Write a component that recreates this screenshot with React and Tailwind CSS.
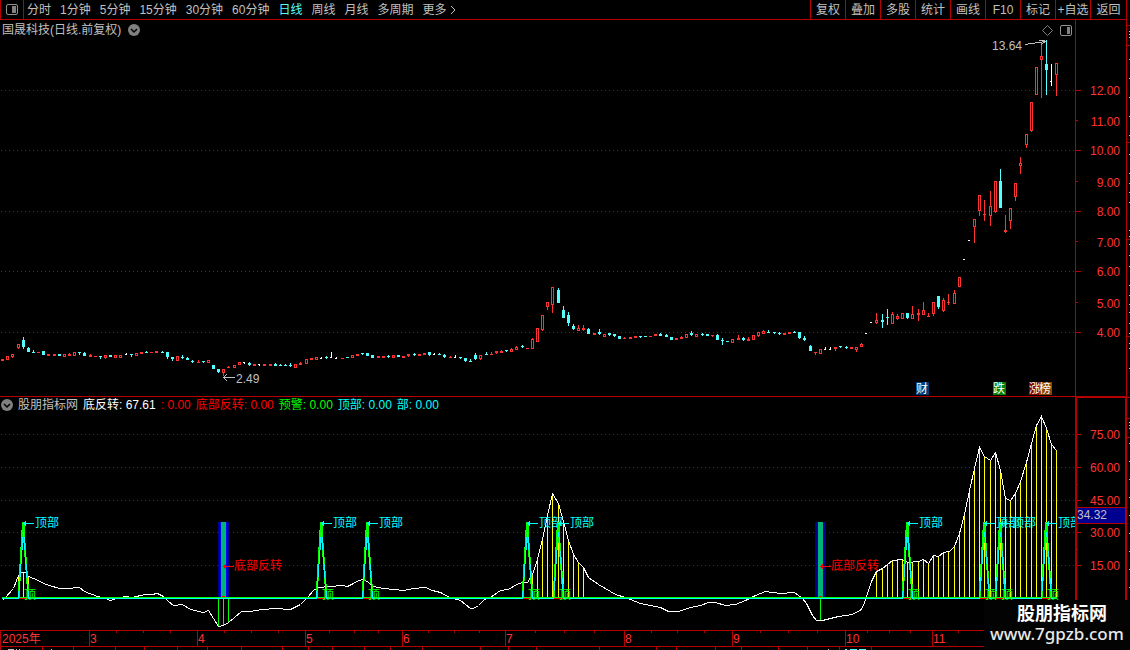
// App.jsx
import React from 'react';

const PERIODS = ['分时', '1分钟', '5分钟', '15分钟', '30分钟', '60分钟', '日线', '周线', '月线', '多周期', '更多'];
const ACTIONS = ['复权', '叠加', '多股', '统计', '画线', 'F10', '标记', '+自选', '返回'];

// [kind, high, open/close top, open/close bottom, low]
// h = hollow red, r = solid red, c = cyan, w = white
const CANDLES = [
    ['r', 359, 359, 361, 361], ['h', 356, 356, 360, 360], ['h', 354, 354, 357, 358], ['h', 344, 344, 348, 349], ['c', 337, 340, 347, 349],
    ['c', 347, 348, 352, 352], ['c', 350, 352, 353, 353], ['r', 352, 352, 353, 353], ['c', 351, 351, 355, 355], ['r', 354, 354, 356, 356],
    ['r', 354, 354, 356, 356], ['c', 354, 354, 356, 356], ['h', 354, 354, 357, 357], ['r', 353, 354, 356, 356], ['h', 352, 352, 356, 356],
    ['c', 352, 352, 353, 355], ['c', 352, 353, 356, 356], ['r', 354, 355, 357, 357], ['r', 356, 356, 357, 357], ['c', 356, 356, 357, 359],
    ['h', 355, 355, 358, 359], ['c', 355, 355, 357, 357], ['h', 355, 355, 358, 358], ['h', 355, 355, 358, 358], ['w', 353, 354, 355, 355],
    ['c', 354, 354, 355, 357], ['h', 353, 353, 356, 356], ['r', 352, 352, 354, 354], ['c', 351, 352, 353, 353], ['r', 352, 352, 353, 353],
    ['r', 351, 351, 353, 353], ['c', 351, 352, 353, 353], ['c', 352, 352, 357, 359], ['c', 357, 357, 359, 361], ['h', 356, 356, 361, 361],
    ['c', 355, 357, 358, 359], ['c', 357, 358, 360, 360], ['c', 360, 361, 362, 363], ['r', 360, 362, 363, 363], ['c', 361, 361, 362, 363],
    ['h', 360, 360, 363, 363], ['c', 365, 365, 369, 369], ['c', 369, 369, 372, 373], ['h', 369, 369, 373, 376], ['r', 366, 367, 368, 368],
    ['h', 365, 365, 368, 368], ['h', 362, 362, 365, 365], ['w', 362, 362, 363, 364], ['c', 362, 363, 365, 366], ['r', 364, 364, 366, 366],
    ['w', 364, 364, 365, 366], ['r', 364, 364, 366, 366], ['r', 364, 364, 366, 366], ['c', 363, 364, 366, 366], ['c', 364, 365, 366, 366],
    ['c', 364, 365, 366, 366], ['c', 363, 365, 366, 367], ['h', 364, 364, 368, 368], ['r', 362, 363, 365, 365], ['h', 359, 359, 364, 364],
    ['r', 358, 358, 360, 360], ['h', 357, 357, 360, 360], ['w', 357, 358, 359, 359], ['c', 356, 357, 358, 359], ['w', 352, 357, 358, 358],
    ['w', 357, 358, 359, 359], ['r', 358, 358, 359, 359], ['c', 357, 357, 358, 358], ['h', 355, 355, 358, 358], ['r', 354, 354, 356, 356],
    ['c', 353, 353, 354, 355], ['c', 353, 353, 356, 356], ['c', 355, 355, 358, 358], ['r', 356, 356, 358, 358], ['r', 356, 356, 358, 358],
    ['c', 355, 356, 357, 358], ['h', 355, 355, 358, 358], ['c', 355, 355, 357, 357], ['r', 356, 356, 358, 358], ['r', 354, 354, 356, 357],
    ['c', 353, 354, 355, 356], ['r', 354, 354, 356, 356], ['r', 353, 353, 355, 355], ['c', 352, 352, 355, 356], ['w', 353, 354, 355, 355],
    ['c', 353, 354, 355, 355], ['c', 354, 355, 357, 358], ['r', 356, 357, 358, 358], ['w', 355, 357, 358, 358], ['c', 357, 357, 358, 359],
    ['c', 358, 358, 361, 362], ['c', 359, 361, 362, 362], ['c', 353, 355, 359, 360], ['h', 355, 355, 359, 360], ['c', 352, 354, 355, 355],
    ['r', 352, 354, 355, 355], ['r', 351, 351, 353, 354], ['r', 350, 351, 353, 353], ['c', 350, 350, 351, 352], ['h', 348, 349, 352, 352],
    ['h', 346, 347, 350, 350], ['c', 345, 346, 347, 348], ['r', 348, 348, 349, 349], ['h', 338, 339, 349, 349], ['h', 328, 328, 342, 342],
    ['h', 315, 315, 330, 331], ['h', 302, 302, 307, 310], ['h', 287, 287, 305, 313], ['c', 288, 290, 303, 303], ['c', 306, 310, 318, 318],
    ['c', 312, 315, 323, 326], ['c', 324, 326, 329, 330], ['h', 325, 328, 331, 331], ['r', 325, 328, 330, 331], ['c', 328, 329, 334, 334],
    ['r', 333, 333, 335, 335], ['c', 329, 332, 334, 335], ['h', 334, 334, 337, 337], ['c', 333, 333, 335, 336], ['c', 334, 334, 336, 337],
    ['c', 336, 336, 339, 339], ['r', 337, 338, 339, 339], ['r', 337, 337, 339, 339], ['r', 336, 336, 338, 338], ['c', 336, 336, 337, 338],
    ['c', 336, 336, 337, 337], ['r', 336, 336, 337, 337], ['r', 334, 334, 336, 336], ['c', 333, 334, 336, 336], ['c', 334, 335, 337, 337],
    ['c', 337, 337, 340, 340], ['r', 338, 338, 340, 340], ['r', 336, 337, 339, 339], ['h', 334, 334, 338, 338], ['c', 331, 333, 335, 336],
    ['h', 334, 334, 337, 337], ['c', 333, 334, 335, 336], ['c', 334, 334, 336, 336], ['r', 335, 335, 336, 337], ['c', 334, 335, 340, 340],
    ['c', 338, 340, 341, 345], ['c', 341, 341, 342, 342], ['h', 339, 339, 343, 343], ['r', 335, 338, 340, 340], ['c', 337, 338, 340, 341],
    ['r', 337, 339, 341, 341], ['h', 335, 335, 340, 340], ['h', 332, 332, 336, 337], ['h', 330, 331, 334, 334], ['c', 330, 332, 333, 333],
    ['c', 332, 332, 333, 334], ['c', 332, 333, 334, 335], ['r', 333, 333, 335, 335], ['r', 332, 332, 334, 334], ['c', 331, 332, 333, 333],
    ['c', 332, 332, 338, 339], ['c', 336, 338, 340, 341], ['c', 345, 346, 351, 351], ['r', 352, 352, 353, 355], ['h', 349, 349, 354, 354],
    ['w', 347, 349, 350, 350], ['w', 347, 349, 350, 350], ['r', 347, 347, 349, 351], ['c', 346, 346, 347, 348], ['c', 346, 347, 348, 349],
    ['r', 347, 347, 349, 349], ['h', 347, 347, 350, 352], ['h', 343, 344, 347, 347], ['w', 333, 333, 334, 334], ['w', 322, 322, 323, 323],
    ['h', 313, 320, 323, 324], ['c', 314, 320, 322, 328], ['c', 309, 317, 318, 325], ['h', 312, 314, 324, 324], ['h', 314, 316, 319, 320],
    ['h', 313, 313, 319, 319], ['c', 313, 313, 318, 319], ['h', 306, 314, 319, 319], ['r', 309, 313, 315, 321], ['h', 302, 310, 315, 315],
    ['r', 313, 316, 317, 317], ['h', 302, 302, 314, 316], ['c', 296, 296, 307, 309], ['h', 298, 300, 311, 312], ['r', 294, 302, 303, 305],
    ['h', 290, 293, 304, 304], ['h', 277, 277, 287, 287], ['w', 259, 259, 260, 260], ['w', 240, 240, 241, 241], ['h', 219, 219, 227, 243],
    ['h', 195, 195, 211, 216], ['r', 200, 214, 215, 221], ['h', 191, 206, 216, 226], ['h', 181, 181, 212, 213], ['c', 169, 181, 208, 208],
    ['r', 215, 230, 232, 233], ['h', 208, 208, 221, 229], ['h', 183, 183, 197, 201], ['h', 157, 163, 166, 174], ['h', 134, 134, 145, 148],
    ['h', 102, 102, 131, 132], ['h', 67, 67, 95, 95], ['h', 43, 56, 60, 98], ['c', 40, 64, 70, 95], ['w', 64, 81, 82, 86],
    ['h', 63, 63, 75, 96],
];

const COLORS = { h: '#ff3232', r: '#ff3232', c: '#54ffff', w: '#ffffff' };
const LINE = '#b40000';

// seven candles take 36px
const candleX = (i) => 18 + 36 * Math.floor((i - 3) / 7) + 5 * ((((i - 3) % 7) + 7) % 7);

const CURVE = [
    [2, 600], [5, 597], [13, 588], [18, 575], [21, 572], [25, 572], [28, 576], [33, 578], [38, 580], [43, 583], [49, 585], [59, 588],
    [71, 588], [74, 587], [79, 587], [84, 591], [97, 596], [105, 598], [110, 600], [116, 598], [125, 596], [132, 597], [140, 595],
    [146, 594], [151, 594], [157, 593], [163, 596], [168, 601], [173, 605], [182, 604], [190, 609], [203, 612], [208, 610], [213, 618],
    [218, 626], [223, 625], [228, 622], [234, 617], [241, 611], [249, 611], [262, 609], [275, 608], [290, 609], [300, 604], [308, 596],
    [313, 590], [318, 587], [330, 586], [342, 585], [347, 586], [353, 583], [358, 580], [363, 579], [368, 582], [373, 586], [383, 588],
    [393, 589], [403, 590], [413, 588], [425, 587], [432, 590], [440, 592], [449, 597], [460, 600], [470, 608], [473, 608], [478, 605],
    [484, 599], [490, 597], [500, 590], [508, 589], [516, 584], [522, 582], [527, 582], [532, 574], [537, 559], [542, 539], [547, 515],
    [552, 493], [558, 503], [563, 521], [568, 540], [573, 554], [578, 562], [583, 567], [588, 577], [598, 584], [610, 591], [615, 594],
    [625, 597], [640, 603], [650, 605], [660, 607], [668, 611], [678, 611], [690, 607], [700, 605], [708, 602], [715, 602], [725, 605],
    [735, 604], [745, 600], [755, 595], [765, 591], [780, 593], [794, 592], [802, 598], [806, 603], [812, 615], [816, 620], [822, 620],
    [830, 618], [838, 616], [852, 614], [861, 609], [864, 602], [866, 596], [871, 581], [876, 571], [882, 568], [887, 564], [892, 560],
    [902, 559], [907, 562], [918, 561], [923, 559], [928, 563], [933, 555], [938, 556], [943, 552], [949, 551], [954, 546], [959, 533],
    [964, 514], [969, 490], [974, 468], [979, 447], [984, 456], [990, 460], [995, 452], [1000, 470], [1005, 498], [1010, 500],
    [1015, 493], [1020, 481], [1026, 462], [1031, 443], [1036, 425], [1041, 416], [1046, 428], [1051, 444], [1056, 450],
];

const curveY = (x) => {
    const k = CURVE.findIndex((p) => p[0] >= x);
    if (k <= 0) return CURVE[0][1];
    const [x0, y0] = CURVE[k - 1];
    const [x1, y1] = CURVE[k];
    return Math.round(y0 + ((y1 - y0) * (x - x0)) / (x1 - x0));
};

const ALL_X = CANDLES.map((_, i) => candleX(i));
const YELLOW_X = ALL_X.filter((x) => (x >= 18 && x <= 28) || (x >= 532 && x <= 583) || x >= 876);
const SPIKES = [23, 321, 367, 527, 558, 907, 984, 1000, 1046];

const PRICE_TICKS = [[90, '12.00'], [120, '11.00'], [150, '10.00'], [181, '9.00'], [211, '8.00'], [241, '7.00'], [271, '6.00'], [302, '5.00'], [332, '4.00']];
const PRICE_GRID = [90, 150, 211, 271, 332];
const IND_TICKS = [[434, '75.00'], [467, '60.00'], [500, '45.00'], [532, '30.00'], [565, '15.00']];
const IND_MINOR = [451, 484, 549];

const BADGES = [
    [916, '财', '#003c78'],
    [993, '跌', '#008200'],
    [1029, '涨', '#820000'],
    [1039, '榜', '#8c4600'],
];

const LEGEND = [
    ['股朋指标网', 'text-[#c0c0c0]'],
    ['底反转: 67.61', 'text-white'],
    [': 0.00', 'text-[#ff0000]'],
    ['底部反转: 0.00', 'text-[#ff0000]'],
    ['预警: 0.00', 'text-[#00ff00]'],
    ['顶部: 0.00', 'text-[#00ffff]'],
    ['部: 0.00', 'text-[#00ffff]'],
];

const MONTHS = [[89, '3'], [197, '4'], [305, '5'], [402, '6'], [505, '7'], [624, '8'], [732, '9'], [845, '10'], [932, '11']];
const WEEKS = [116, 143, 170, 224, 251, 278, 329, 354, 378, 428, 454, 479, 535, 564, 594, 651, 677, 704, 760, 788, 817, 867, 889, 910, 958];
const TABS = [0, 42, 73, 115, 144, 177, 207, 241, 282, 308, 332, 364, 390, 422, 480, 508, 536, 599, 656, 676, 715, 741, 778, 807, 839, 871];

const EDGE_RED = [25, 45, 142, 239, 336, 397, 418, 437];
const EDGE_GREY = [31, 34, 37, 59, 78, 97, 116, 135, 154, 173, 183, 192, 202, 230, 236, 244, 255, 266, 285, 295, 304, 312, 323, 333, 343, 348, 368, 422, 425, 428, 443, 461, 479, 497, 515, 533, 551, 569, 587];

const PanelIcon = ({ side }) => (
    <svg width="12" height="11" viewBox="0 0 12 11">
        <rect x="0.5" y="0.5" width="11" height="10" rx="1.5" fill="none" stroke="#909090" />
        <rect x={side === 'left' ? 6 : 7} y="2" width={side === 'left' ? 4 : 3} height="7" fill="#808080" />
    </svg>
);

const Chevron = () => (
    <svg width="12" height="12" viewBox="0 0 12 12">
        <circle cx="6" cy="6" r="6" fill="#808080" />
        <path d="M3 5 L6 8 L9 5" fill="none" stroke="#000" strokeWidth="1.5" />
    </svg>
);

const Grid = ({ rows }) =>
    rows.map((y) => <line key={y} x1="1" x2="1075" y1={y + 0.5} y2={y + 0.5} stroke={LINE} strokeDasharray="1 3" />);

const Candle = ({ i, data }) => {
    const [kind, high, top, bottom, low] = data;
    const x = candleX(i);
    const color = COLORS[kind];
    return (
        <g fill={color}>
            {top > high && <rect x={x} y={high} width="1" height={top - high} />}
            {low > bottom && <rect x={x} y={bottom} width="1" height={low - bottom} />}
            {kind === 'h' ? (
                <rect x={x - 0.5} y={top + 0.5} width="2" height={bottom - top - 1} fill="none" stroke={color} />
            ) : (
                <rect x={x - 1} y={top} width={kind === 'w' ? 2 : 3} height={bottom - top} />
            )}
        </g>
    );
};

const PriceChart = () => (
    <svg viewBox="0 40 1075 356" preserveAspectRatio="xMinYMin meet" className="block w-full h-[356px]" shapeRendering="crispEdges" fontSize="12">
        <Grid rows={PRICE_GRID} />
        {CANDLES.map((c, i) => (
            <Candle key={i} i={i} data={c} />
        ))}
        <rect x="1051" y="64" width="1" height="22" fill="#fff" />
        {/* high and low marks */}
        <g fill="none" stroke="#c0c0c0">
            <path d="M1025 44.5 L1032 43.5 L1045 41.5 M1039 40.5 H1045 M1045.5 41 L1041 45" />
            <path d="M223 377.5 H235 M227 374 L223.5 377.5 L227 381" />
        </g>
        <g fill="#c0c0c0">
            <text x="992" y="50">13.64</text>
            <text x="236" y="383">2.49</text>
        </g>
        {BADGES.map(([x, label, color]) => (
            <g key={label}>
                <rect x={x} y="382" width="13" height="13" fill={color} />
                <text x={x} y="393" fill="#fff">{label}</text>
            </g>
        ))}
    </svg>
);

const PriceAxis = () => (
    <svg viewBox="0 20 51 376" className="block shrink-0 w-[51px] h-[376px]" shapeRendering="crispEdges" fontSize="12" fill={LINE}>
        <rect x="0" y="20" width="1" height="376" />
        {PRICE_TICKS.map(([y, label]) => {
            const major = PRICE_GRID.includes(y);
            return (
                <g key={label}>
                    <rect x="1" y={y} width={major ? 5 : 2} height="1" />
                    <text x="45" y={major ? y + 5 : y + 6} textAnchor="end" fill="#ff3232">{label}</text>
                </g>
            );
        })}
    </svg>
);

const Spike = ({ x }) => (
    <g fill="none">
        <rect x={x - 4} y="598" width="9" height="1" fill="#ff0000" />
        <path d={`M${x - 4.5} 598 L${x} 522 L${x + 5.5} 598`} stroke="#00ff00" strokeWidth="2" />
        <path d={`M${x - 4.5} 598 L${x + 0.5} 530 L${x + 5.5} 598`} stroke="#00ffff" />
        <rect x={x - 1} y="522" width="3" height="10" fill="#00ff00" />
        <path d={`M${x + 1} 523.5 H${x + 11} M${x + 3} 521.5 L${x + 1} 523.5 L${x + 3} 525.5`} stroke="#00ffff" />
        <text x={x + 1} y="599" fill="#00ff00">顶</text>
        <text x={x + 12} y="527" fill="#00ffff">顶部</text>
    </g>
);

const Reversal = ({ x, bright }) => (
    <g>
        <rect x={x - 5} y="522" width="11" height="75" fill="#000090" />
        {bright && <rect x={x - 3} y="522" width="7" height="75" fill="#0000ff" />}
        <rect x={x - 2} y="522" width="5" height="75" fill="#00b478" />
        <rect x={x - 1} y="596" width="3" height="1" fill="#ff0000" />
        <path d={`M${x + 1} 566.5 H${x + 11} M${x + 3} 564.5 L${x + 1} 566.5 L${x + 3} 568.5`} fill="none" stroke="#ff0000" />
        <text x={x + 11} y="570" fill="#ff0000">底部反转</text>
    </g>
);

const IndicatorChart = () => (
    <svg viewBox="0 414 1075 216" preserveAspectRatio="xMinYMin meet" className="block w-full h-[216px]" shapeRendering="crispEdges" fontSize="12">
        <Grid rows={IND_TICKS.map((t) => t[0])} />
        {YELLOW_X.map((x) => (
            <rect key={x} x={x} y={curveY(x)} width="1" height={597 - curveY(x)} fill="#ffff00" />
        ))}
        {[218, 223, 228, 820].map((x) => (
            <rect key={x} x={x} y="598" width="1" height={curveY(x) - 598} fill="#00ff00" />
        ))}
        <polyline points={CURVE.map(([x, y]) => `${x + 0.5},${y + 0.5}`).join(' ')} fill="none" stroke="#fff" />
        <Reversal x={223} bright />
        <Reversal x={820} />
        <rect x="2" y="597" width="1055" height="1" fill="#00ff00" />
        <rect x="2" y="598" width="1055" height="1" fill="#00ffff" />
        {SPIKES.map((x) => (
            <Spike key={x} x={x} />
        ))}
    </svg>
);

const IndicatorAxis = () => (
    <svg viewBox="0 397 51 233" className="block shrink-0 w-[51px] h-[233px]" shapeRendering="crispEdges" fontSize="12" fill={LINE}>
        <rect x="0" y="397" width="2" height="233" />
        <rect x="50" y="397" width="1" height="233" />
        <rect x="0" y="397" width="51" height="1" />
        {IND_MINOR.map((y) => (
            <rect key={y} x="2" y={y} width="1" height="1" />
        ))}
        {IND_TICKS.map(([y, label]) => (
            <g key={label}>
                <rect x="2" y={y} width="4" height="1" />
                <text x="45" y={y + 5} textAnchor="end" fill="#ff3232">{label}</text>
            </g>
        ))}
        {/* current value */}
        <rect x="2" y="507" width="48" height="17" />
        <rect x="2" y="508" width="48" height="15" fill="#000090" />
        <text x="2" y="519" fill="#c0c0c0">34.32</text>
    </svg>
);

const TimeAxis = () => (
    <svg viewBox="0 630 1126 20" preserveAspectRatio="xMinYMin meet" className="block w-full h-5" shapeRendering="crispEdges" fontSize="12" fill={LINE}>
        <rect x="0" y="630" width="1126" height="1" />
        <rect x="0" y="646" width="1126" height="1" />
        <rect x="0" y="630" width="1" height="16" />
        <text x="2" y="643" fill="#ff3232">2025年</text>
        {MONTHS.map(([x, label]) => (
            <g key={label}>
                <rect x={x} y="631" width="1" height="15" />
                <text x={x + 1} y="643" fill="#ff3232">{label}</text>
            </g>
        ))}
        {WEEKS.map((x) => (
            <rect key={x} x={x} y="631" width="1" height="2" />
        ))}
        {TABS.map((x) => (
            <rect key={x} x={x} y="647" width="1" height="3" />
        ))}
        <path d="M8 649.5 H14 M16 649.5 H17 M19 649.5 H20 M51 649.5 H52 M828 649.5 H829" stroke="#c0c0c0" />
        <path d="M845 649.5 H847 M850 649.5 H857 M859 649.5 H866" stroke="#54ffff" />
    </svg>
);

const App = () => {
    return (
        <div className="relative flex w-full min-h-screen overflow-hidden bg-black text-xs leading-4 text-[#c0c0c0] font-['Liberation_Sans','Noto_Sans_CJK_SC',sans-serif]">
            <main className="flex-1 min-w-0 flex flex-col">
                {/* toolbar */}
                <header className="flex h-5 border-b border-[#b40000]">
                    <button aria-label="侧栏" className="w-6 shrink-0 flex items-center justify-center border-x border-[#b40000]">
                        <PanelIcon side="left" />
                    </button>
                    <nav className="flex-1 flex items-center gap-[9px] pl-[3px] whitespace-nowrap">
                        {PERIODS.map((p) => (
                            <button key={p} className={p === '日线' ? 'text-[#54ffff]' : ''}>
                                {p}
                            </button>
                        ))}
                        <svg width="6" height="10" viewBox="0 0 6 10" className="-ml-1.5" fill="none" stroke="#c0c0c0">
                            <path d="M1 1 L5 5 L1 9" />
                        </svg>
                    </nav>
                    <div className="flex whitespace-nowrap">
                        {ACTIONS.map((a) => (
                            <button key={a} className="w-[35px] last:w-9 flex items-center justify-center border-l border-[#b40000]">
                                {a}
                            </button>
                        ))}
                    </div>
                </header>

                {/* price panel */}
                <section className="flex border-b border-[#b40000]">
                    <div className="flex-1 min-w-0">
                        <div className="flex items-center h-5 pl-0.5 pr-[3px]">
                            <h1>国晟科技(日线.前复权)</h1>
                            <button aria-label="展开" className="ml-[7px]">
                                <Chevron />
                            </button>
                            <div className="ml-auto flex items-center gap-[7px]">
                                <svg width="11" height="11" viewBox="0 0 11 11" fill="none" stroke="#808080">
                                    <path d="M5.5 0.5 L10.5 5.5 L5.5 10.5 L0.5 5.5 Z" />
                                </svg>
                                <PanelIcon side="right" />
                            </div>
                        </div>
                        <PriceChart />
                    </div>
                    <PriceAxis />
                </section>

                {/* indicator panel */}
                <section className="flex">
                    <div className="flex-1 min-w-0">
                        <div className="flex items-center gap-[5px] h-[17px] pl-px pb-px whitespace-nowrap">
                            <button aria-label="展开">
                                <Chevron />
                            </button>
                            {LEGEND.map(([text, color]) => (
                                <span key={text} className={color}>
                                    {text}
                                </span>
                            ))}
                        </div>
                        <IndicatorChart />
                    </div>
                    <IndicatorAxis />
                </section>

                <TimeAxis />
            </main>

            {/* edge of the next panel */}
            <aside className="w-1 shrink-0 border-l border-[#b40000]">
                <svg width="3" height="600" viewBox="0 0 3 600" shapeRendering="crispEdges" className="block">
                    {EDGE_RED.map((y) => (
                        <rect key={y} x="0" y={y} width="3" height="1" fill={LINE} />
                    ))}
                    {EDGE_GREY.map((y) => (
                        <rect key={y} x="2" y={y} width="1" height="1" fill="#c0c0c0" />
                    ))}
                </svg>
            </aside>

            {/* site mark */}
            <div className="absolute right-0 bottom-0 w-[146px] h-[50px] flex flex-col bg-[#030303] text-white pl-1.5 pt-0.5">
                <strong className="self-center pl-1 text-lg leading-6 whitespace-nowrap">股朋指标网</strong>
                <span className="text-[17px] leading-4 font-medium font-['Noto_Sans',sans-serif] text-[#e8e8e8]">www.7gpzb.com</span>
            </div>
        </div>
    );
};

export default App;
